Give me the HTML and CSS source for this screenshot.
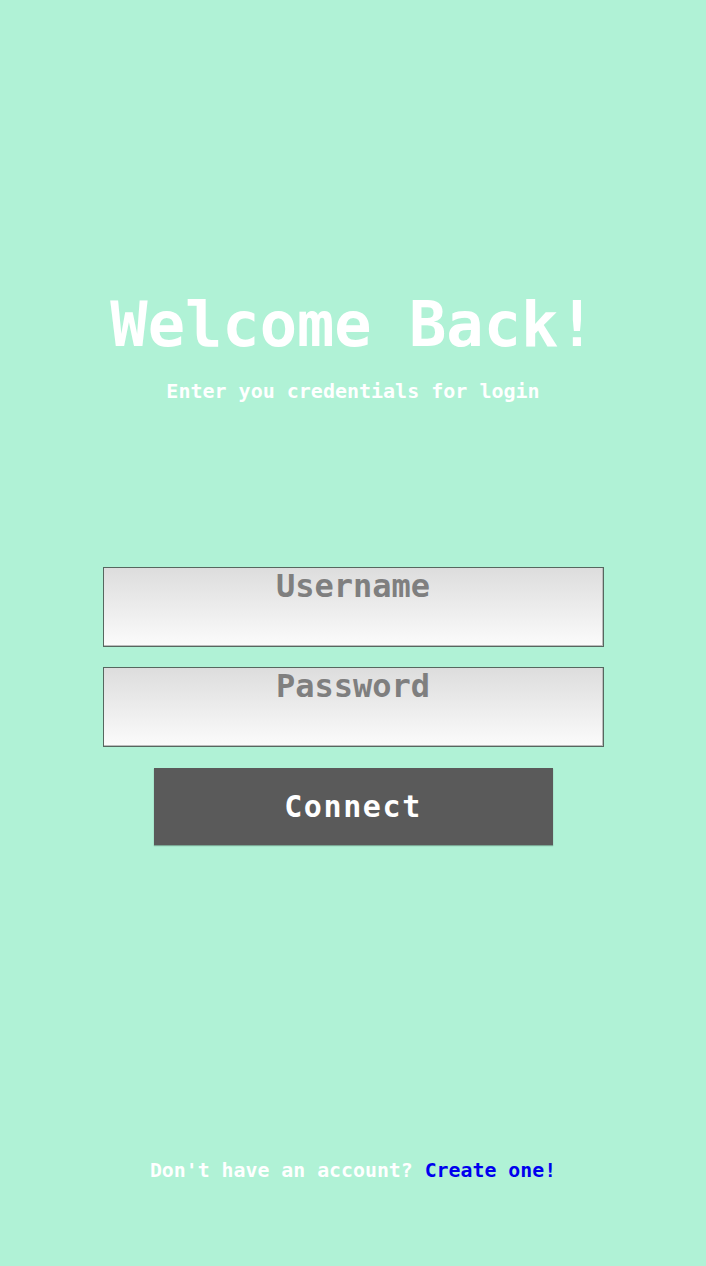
FILE: index.html
```html
<!DOCTYPE html>
<html lang="en">
<head>
<meta charset="utf-8">
<title>Login</title>
<link rel="stylesheet" href="styles.css">
</head>
<body>
<div class="page">
  <header class="header">
    <h1 class="title">Welcome Back!</h1>
    <p class="subtitle">Enter you credentials for login</p>
  </header>
  <form class="form">
    <input class="field" type="text" placeholder="Username">
    <input class="field" type="password" placeholder="Password">
    <button class="connect" type="button">Connect</button>
  </form>
  <footer class="footer">
    Don't have an account? <a class="create" href="#">Create one!</a>
  </footer>
</div>
</body>
</html>
```

FILE: styles.css
```css
html, body {
  margin: 0;
  padding: 0;
}
body {
  background: #b0f2d6;
  font-family: "DejaVu Sans Mono", monospace;
  font-weight: bold;
  color: #ffffff;
}
.page {
  min-height: 1266px;
  display: flex;
  flex-direction: column;
  align-items: center;
}
.header {
  padding-top: 294px;
  text-align: center;
}
.title {
  margin: 0;
  font-size: 62px;
  line-height: 62px;
  font-weight: bold;
}
.subtitle {
  margin: 25px 0 0;
  font-size: 20px;
  line-height: 20px;
}
.form {
  margin-top: 166px;
  width: 501px;
  display: flex;
  flex-direction: column;
  align-items: center;
  gap: 20px;
}
.field {
  box-sizing: border-box;
  width: 501px;
  height: 80px;
  margin: 0;
  padding: 0 0 42px;
  border: 1px solid #56675f;
  box-shadow: inset -1px -1px 0 #bcbcbc;
  background: linear-gradient(#dddddd, #fbfbfb);
  font-family: "DejaVu Sans Mono", monospace;
  font-weight: bold;
  font-size: 32px;
  color: #7f7f7f;
  text-align: center;
  outline: none;
}
.field::placeholder {
  color: #7f7f7f;
  opacity: 1;
}
.connect {
  margin-top: 1px;
  width: 399px;
  height: 77px;
  border: none;
  background: #5a5a5a;
  box-shadow: 0 1px 1px rgba(0, 0, 0, 0.3);
  color: #ffffff;
  font-family: "DejaVu Sans Mono", monospace;
  font-weight: bold;
  font-size: 30px;
  letter-spacing: 1.6px;
  padding: 0;
}
.footer {
  margin-top: auto;
  padding-bottom: 85px;
  font-size: 19.85px;
  line-height: 20px;
}
.create {
  color: #0000ee;
  text-decoration: none;
}
```
